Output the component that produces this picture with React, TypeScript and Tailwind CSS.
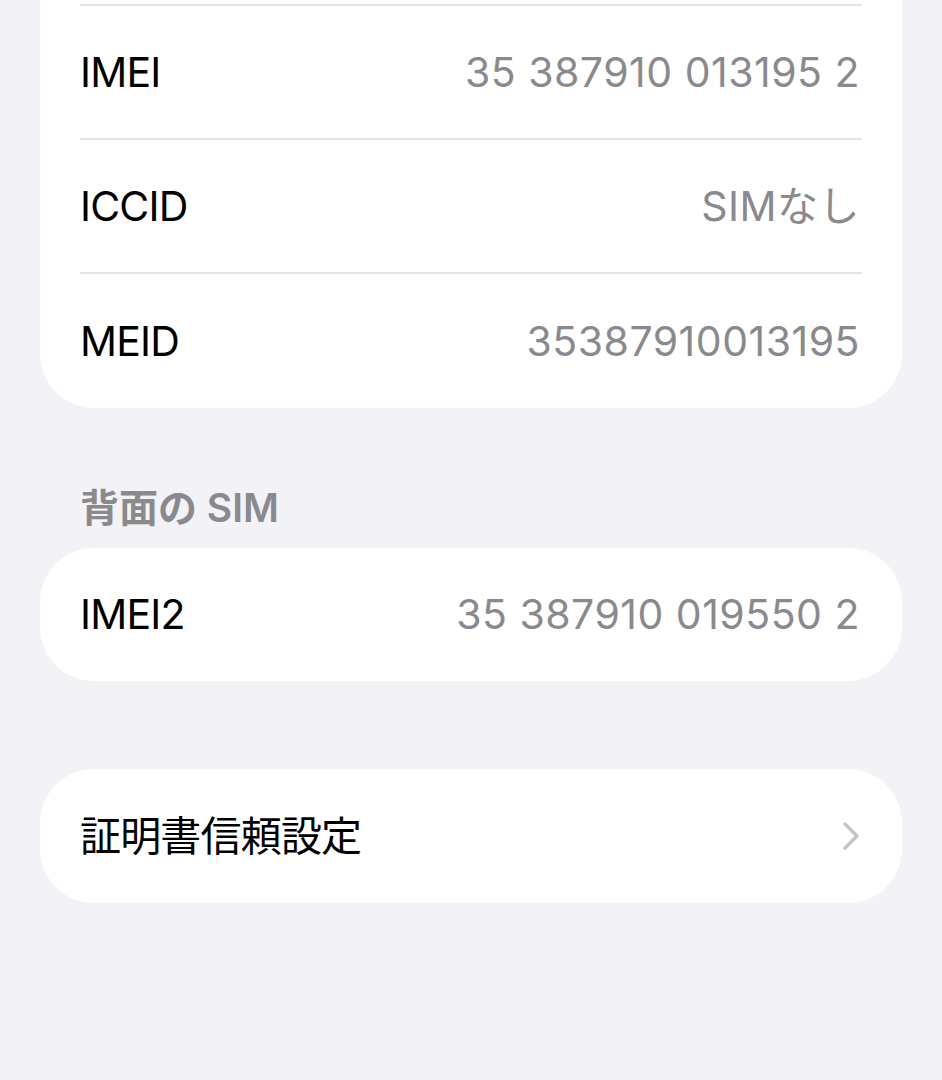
import React from 'react';

const FONT = 'font-[Inter,"Noto_Sans_CJK_JP",sans-serif]';

type Row = { label: string; value?: string; chevron?: boolean };

const Separator: React.FC = () => (
  <div className="px-10">
    <div className="h-[2px] bg-[#e3e3e8]"></div>
  </div>
);

const InfoRow: React.FC<{ row: Row; height: string }> = ({ row, height }) => (
  <div className={`flex items-center justify-between pl-10 pr-[42px] ${height}`}>
    <span className="text-[41px] leading-none text-black tracking-[-0.02em]">{row.label}</span>
    {row.value && (
      <span className="text-[41px] leading-none text-[#8a8a8e] tracking-[0.012em]">{row.value}</span>
    )}
    {row.chevron && (
      <svg width="18" height="30" viewBox="0 0 18 30">
        <polyline points="3,3 15,15 3,27" fill="none" stroke="#c4c4c7" strokeWidth="3.5" strokeLinecap="round" strokeLinejoin="round" />
      </svg>
    )}
  </div>
);

const App: React.FC = () => {
  const topRows: Row[] = [
    { label: 'IMEI', value: '35 387910 013195 2' },
    { label: 'ICCID', value: 'SIMなし' },
    { label: 'MEID', value: '35387910013195' },
  ];

  return (
    <div className={`min-h-screen w-full bg-[#f2f2f7] px-10 pb-20 ${FONT}`}>
      <div className="bg-white rounded-b-[54px] pt-1">
        <Separator />
        <InfoRow row={topRows[0]} height="h-[132px]" />
        <Separator />
        <InfoRow row={topRows[1]} height="h-[132px]" />
        <Separator />
        <InfoRow row={topRows[2]} height="h-[134px]" />
      </div>

      <div className="pt-[79px] pb-[19px] px-10">
        <h2 className="text-[39px] leading-[42px] font-semibold text-[#8a8a8e]">背面の SIM</h2>
      </div>

      <div className="bg-white rounded-[54px]">
        <InfoRow row={{ label: 'IMEI2', value: '35 387910 019550 2' }} height="h-[133px]" />
      </div>

      <div className="mt-[88px] bg-white rounded-[54px]">
        <InfoRow row={{ label: '証明書信頼設定', chevron: true }} height="h-[134px]" />
      </div>
    </div>
  );
};

export default App;
